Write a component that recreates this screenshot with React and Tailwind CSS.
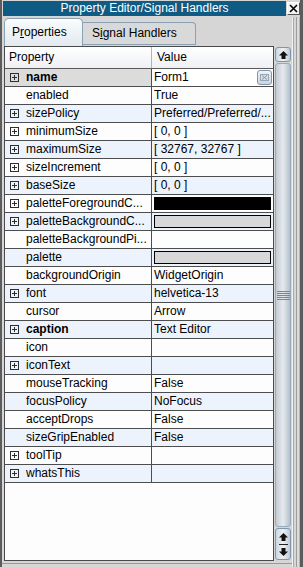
import React from "react";

const rows = [
  { name: "name", value: "Form1", plus: true, bold: true, kind: "edit" },
  { name: "enabled", value: "True" },
  { name: "sizePolicy", value: "Preferred/Preferred/...", plus: true },
  { name: "minimumSize", value: "[ 0, 0 ]", plus: true },
  { name: "maximumSize", value: "[ 32767, 32767 ]", plus: true },
  { name: "sizeIncrement", value: "[ 0, 0 ]", plus: true },
  { name: "baseSize", value: "[ 0, 0 ]", plus: true },
  { name: "paletteForegroundC...", kind: "black", plus: true },
  { name: "paletteBackgroundC...", kind: "gray", plus: true },
  { name: "paletteBackgroundPi...", value: "" },
  { name: "palette", kind: "gray" },
  { name: "backgroundOrigin", value: "WidgetOrigin" },
  { name: "font", value: "helvetica-13", plus: true },
  { name: "cursor", value: "Arrow" },
  { name: "caption", value: "Text Editor", plus: true, bold: true },
  { name: "icon", value: "" },
  { name: "iconText", value: "", plus: true },
  { name: "mouseTracking", value: "False" },
  { name: "focusPolicy", value: "NoFocus" },
  { name: "acceptDrops", value: "False" },
  { name: "sizeGripEnabled", value: "False" },
  { name: "toolTip", value: "", plus: true },
  { name: "whatsThis", value: "", plus: true },
];

const PlusBox = () => (
  <svg width="9" height="9" viewBox="0 0 9 9" className="shrink-0">
    <rect x="0.5" y="0.5" width="8" height="8" fill="none" stroke="#2e2e2e" />
    <path d="M2 4.5h5M4.5 2v5" stroke="#2e2e2e" />
  </svg>
);

const UpArrow = () => (
  <svg width="9" height="8" viewBox="0 0 9 8">
    <path d="M4.5 0L9 4.5H6.5V8h-4V4.5H0z" fill="#111" />
  </svg>
);

const DownArrow = () => (
  <svg width="9" height="8" viewBox="0 0 9 8">
    <path d="M4.5 8L9 3.5H6.5V0h-4v3.5H0z" fill="#111" />
  </svg>
);

const Row = ({ row, index }) => {
  const selected = index === 0;
  const bg = index % 2 === 0 ? "bg-[#edf3fd]" : "bg-[#fdfdfd]";
  return (
    <div className={`flex h-[18px] border-b border-[#4d4d4d] ${bg}`}>
      <div
        className={`flex w-[147px] shrink-0 items-center gap-[7px] border-r border-[#4d4d4d] pl-[5px] ${
          selected ? "bg-[#dcdcdc]" : ""
        }`}
      >
        {row.plus ? <PlusBox /> : <span className="w-[9px] shrink-0" />}
        <span className={`whitespace-nowrap ${row.bold ? "font-bold" : ""}`}>
          {row.name}
        </span>
      </div>
      <div className="flex flex-1 items-center">
        {row.kind === "edit" && (
          <div className="flex h-full flex-1 items-center bg-white pl-[2px]">
            <span className="flex-1">{row.value}</span>
            <div className="mr-[1px] flex h-[15px] w-[15px] items-center justify-center rounded-[3px] border border-[#8096ab] bg-gradient-to-b from-[#eef3f8] to-[#c9d5e0]">
              <svg width="9" height="9" viewBox="0 0 9 9">
                <rect x="0.5" y="1.5" width="8" height="6" fill="#d7dde3" stroke="#9aa7b3" />
                <path d="M2 2.5l5 4M7 2.5l-5 4" stroke="#8b97a3" />
              </svg>
            </div>
          </div>
        )}
        {row.kind === "black" && (
          <div className="mx-[2px] h-[13px] flex-1 border border-black bg-black" />
        )}
        {row.kind === "gray" && (
          <div className="mx-[2px] h-[13px] flex-1 border border-black bg-[#d8d8d8]" />
        )}
        {!row.kind && <span className="whitespace-nowrap pl-[2px]">{row.value}</span>}
      </div>
    </div>
  );
};

export default function App() {
  return (
    <div className="flex h-[567px] w-[303px] overflow-hidden border-l-2 border-r-[3px] border-[#5c5c5c] bg-[#d6d6d6] font-['Liberation_Sans',Arial,sans-serif] text-[12px] leading-[17px] text-black">
      <div className="flex w-[298px] flex-col">
        {/* title bar */}
        <div className="flex h-[17px] shrink-0 pt-[1px]">
          <div className="ml-[1px] flex h-[15px] w-[284px] items-center justify-center bg-[#0f5b83] text-[12px] leading-[15px] text-white">
            Property Editor/Signal Handlers
          </div>
          <div className="ml-[1px] mt-[1px] flex h-[13px] w-[13px] items-center justify-center border border-t-[#ffffff] border-l-[#ffffff] border-r-[#555] border-b-[#555] bg-[#f2f2f2]">
            <svg width="9" height="9" viewBox="0 0 9 9">
              <path d="M1 1l7 7M8 1L1 8" stroke="#000" strokeWidth="1.6" />
            </svg>
          </div>
        </div>

        <div className="flex flex-1">
          <div className="flex w-[290px] flex-col">
            {/* tabs */}
            <div className="flex h-[29px] shrink-0 items-end pl-[2px]">
              <div className="flex h-[28px] w-[79px] items-center rounded-t-[5px] border border-b-0 border-[#8aa0b4] bg-gradient-to-b from-[#fafcfd] to-[#e3e9ef] pl-[7px]">
                P<span className="underline">r</span>operties
              </div>
              <div className="mb-[1px] flex h-[23px] w-[113px] items-center rounded-tr-[4px] border border-l-0 border-[#8aa0b4] bg-[#d9d9d9] pl-[9px]">
                S<span className="underline">i</span>gnal Handlers
              </div>
            </div>

            {/* table + scrollbar */}
            <div className="flex h-[515px] shrink-0 pl-[2px]">
              <div className="flex w-[270px] flex-col border border-[#4a4a4a] bg-[#fdfdfd]">
                <div className="flex h-[22px] shrink-0 border-b border-[#5a5a5a] bg-gradient-to-b from-[#ffffff] to-[#eef0f3]">
                  <div className="flex w-[147px] items-center border-r border-[#a9b6c2] pl-[4px]">
                    Property
                  </div>
                  <div className="flex flex-1 items-center pl-[5px]">Value</div>
                </div>
                {rows.map((row, i) => (
                  <Row key={row.name} row={row} index={i} />
                ))}
                <div className="flex-1" />
              </div>

              <div className="flex w-[17px] flex-col pl-[1px]">
                <div className="mt-[1px] flex h-[15px] items-center justify-center rounded-[3px] border border-[#7f97ae] bg-gradient-to-r from-[#cdd6de] via-[#eef1f4] to-[#bfcad4]">
                  <UpArrow />
                </div>
                <div className="relative my-[1px] flex flex-1 items-center justify-center rounded-[3px] border border-[#97aabb] bg-gradient-to-r from-[#c3ccd4] via-[#e6eaee] to-[#b3c0cb]">
                  <div className="flex w-[13px] flex-col gap-[1px]">
                    <div className="h-[1px] bg-[#6f8aa3]" />
                    <div className="h-[1px] bg-[#6f8aa3]" />
                    <div className="h-[1px] bg-[#6f8aa3]" />
                    <div className="h-[1px] bg-[#6f8aa3]" />
                    <div className="h-[1px] bg-[#6f8aa3]" />
                  </div>
                </div>
                <div className="mb-[1px] flex h-[32px] flex-col items-center justify-center gap-[3px] rounded-[3px] border border-[#7f97ae] bg-gradient-to-r from-[#cdd6de] via-[#eef1f4] to-[#bfcad4]">
                  <UpArrow />
                  <div className="h-[1px] w-[9px] bg-[#222]" />
                  <DownArrow />
                </div>
              </div>
            </div>

            {/* bottom frame */}
            <div className="mt-[2px] flex-1 border-t border-[#9a9a9a]" />
          </div>

          {/* right frame lines */}
          <div className="flex w-[8px]">
            <div className="w-[1px] bg-[#f2f2f2]" />
            <div className="w-[1px] bg-[#a8a8a8]" />
            <div className="w-[2px] bg-[#d6d6d6]" />
            <div className="w-[1px] bg-[#9c9c9c]" />
            <div className="w-[2px] bg-[#dcdcdc]" />
            <div className="w-[1px] bg-[#b5b5b5]" />
          </div>
        </div>
      </div>
    </div>
  );
}
